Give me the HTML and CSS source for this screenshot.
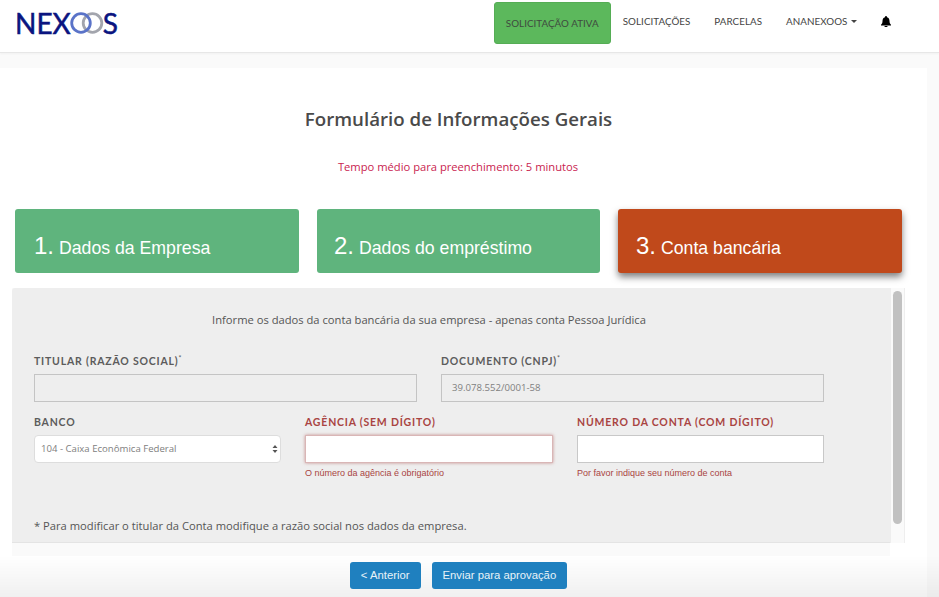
FILE: index.html
```html
<!DOCTYPE html>
<html lang="pt-BR">
<head>
<meta charset="utf-8">
<title>Nexoos</title>
<link rel="stylesheet" href="styles.css">
</head>
<body>
<header class="navbar">
  <a class="logo"><span>NEX</span><svg class="rings" width="38" height="24" viewBox="0 0 38 24"><circle cx="22.5" cy="12" r="9.3" fill="none" stroke="#a3a5ad" stroke-width="2.8"/><circle cx="11" cy="12" r="9.3" fill="none" stroke="#5a73c8" stroke-width="2.8"/></svg><span class="logo-s">S</span></a>
  <nav class="menu">
    <a class="menu-item active">SOLICITAÇÃO ATIVA</a>
    <a class="menu-item">SOLICITAÇÕES</a>
    <a class="menu-item">PARCELAS</a>
    <a class="menu-item">ANANEXOOS <i class="caret"></i></a>
    <a class="menu-item bell"><svg width="10" height="11" viewBox="0 0 20 22"><path d="M10 0a2 2 0 0 1 2 2v.6c3.4.9 5 3.600 5 7.400 0 4 1 5.500 3 7.500v1.500H0v-1.500c2-2 3-3.500 3-7.500 0-3.800 1.600-6.500 5-7.400V2a2 2 0 0 1 2-2zM7 20h6a3 3 0 0 1-6 0z" fill="#000"/></svg></a>
  </nav>
</header>
<main class="page">
  <h1 class="title">Formulário de Informações Gerais</h1>
  <p class="subtitle">Tempo médio para preenchimento: 5 minutos</p>
  <div class="steps">
    <div class="step"><b>1.</b> Dados da Empresa</div>
    <div class="step"><b>2.</b> Dados do empréstimo</div>
    <div class="step current"><b>3.</b> Conta bancária</div>
  </div>
  <section class="scroller">
    <div class="panel">
      <p class="intro">Informe os dados da conta bancária da sua empresa - apenas conta Pessoa Jurídica</p>
      <div class="row two">
        <div class="field">
          <label>TITULAR (RAZÃO SOCIAL)<sup>*</sup></label>
          <div class="input disabled"></div>
        </div>
        <div class="field">
          <label>DOCUMENTO (CNPJ)<sup>*</sup></label>
          <div class="input disabled">39.078.552/0001-58</div>
        </div>
      </div>
      <div class="row three">
        <div class="field">
          <label>BANCO</label>
          <div class="select">104 - Caixa Econômica Federal
            <svg class="updown" width="6" height="10" viewBox="0 0 6 10"><path d="M3 1l2.500 3H.5zM3 9L.5 6h5z" fill="#555"/></svg>
          </div>
        </div>
        <div class="field error">
          <label>AGÊNCIA (SEM DÍGITO)</label>
          <div class="input glow"></div>
          <small>O número da agência é obrigatório</small>
        </div>
        <div class="field error">
          <label>NÚMERO DA CONTA (COM DÍGITO)</label>
          <div class="input plain"></div>
          <small>Por favor indique seu número de conta</small>
        </div>
      </div>
      <p class="note">* Para modificar o titular da Conta modifique a razão social nos dados da empresa.</p>
    </div>
    <div class="track"><div class="thumb"></div></div>
  </section>
</main>
<footer class="actions">
  <a class="btn">&lt; Anterior</a>
  <a class="btn">Enviar para aprovação</a>
</footer>
</body>
</html>
```
FILE: styles.css
```css
* { box-sizing: border-box; }
html, body { height: 100%; }
body {
  margin: 0;
  height: 597px;
  overflow: hidden;
  background: #fafafa;
  font-family: "Open Sans", sans-serif;
  color: #555;
}
.navbar {
  height: 53px;
  background: #fff;
  border-bottom: 1px solid #e7e7e7;
  box-shadow: 0 1px 2px rgba(0,0,0,.04);
  display: flex;
  justify-content: space-between;
  padding-left: 15px;
}
.logo {
  display: flex;
  align-items: center;
  height: 24px;
  margin-top: 11px;
  font-family: Lato, sans-serif;
  font-size: 28px;
  line-height: 24px;
  color: #0a1480;
  -webkit-text-stroke: .5px #0a1480;
}
.rings { margin-left: -1px; flex: none; }
.logo-s { margin-left: -5px; font-size: 28px; }
.menu { display: flex; align-items: flex-start; padding-top: 2px; padding-right: 48px; }
.menu-item {
  font-family: Lato, sans-serif;
  font-size: 9.8px;
  color: #444;
  line-height: 14px;
  padding: 12px 12px 0;
  white-space: nowrap;
  letter-spacing: .05px;
}
.menu-item.active {
  width: 117px;
  height: 42px;
  padding: 13px 0 0;
  text-align: center;
  background: #5cb85c;
  border: 1px solid #55ad55;
  border-radius: 3px;
  color: #3f4a3f;
}
.caret {
  display: inline-block;
  border-top: 3.500px solid #444;
  border-left: 3.500px solid transparent;
  border-right: 3.500px solid transparent;
  vertical-align: 2px;
  margin-left: 1px;
}
.bell { padding-left: 12px; padding-right: 0; }
.bell svg { display: block; margin-top: 2px; }
.page {
  width: 927px;
  height: 529px;
  margin-top: 15px;
  background: #fff;
  padding-top: 39px;
}
.title {
  margin: 0;
  font-family: "Open Sans", sans-serif;
  font-weight: 600;
  font-size: 18.7px;
  line-height: 24px;
  color: #4a4a4a;
  text-align: center;
  padding-right: 10px;
}
.subtitle {
  margin: 28px 0 0;
  font-size: 11.2px;
  line-height: 16px;
  color: #c9234f;
  text-align: center;
  padding-right: 11px;
}
.steps {
  display: flex;
  gap: 18px;
  margin: 34px 25px 0 15px;
}
.step {
  width: 284px;
  height: 64px;
  border-radius: 3px;
  background: #5fb47d;
  color: #fff;
  font-family: "Liberation Sans", sans-serif;
  font-size: 17.700px;
  line-height: 20px;
  padding: 27px 0 0 19px;
}
.step:nth-child(2) { width: 283px; padding-left: 17px; }
.step b { font-weight: 400; font-size: 24px; }
.current {
  flex: none;
  padding-left: 18px;
  background: #c0491b;
  box-shadow: 0 4px 7px rgba(0,0,0,.5);
}
.scroller {
  display: flex;
  margin: 15px 0 0 12px;
  width: 893px;
  height: 268px;
  position: relative;
  background: linear-gradient(to right, #fafafa 878px, #fff 878px);
}
.panel {
  width: 878px;
  height: 255px;
  background: #eee;
  border-bottom: 1px solid #e4e4e4;
  border-radius: 3px 0 0 0;
  padding: 24px 22px 0;
}
.intro {
  margin: 0 0 26px;
  font-size: 11.2px;
  line-height: 16px;
  text-align: center;
  color: #555;
  padding-right: 44px;
}
.row { display: flex; }
.two { gap: 24px; margin-bottom: 13px; }
.two .field { width: 383px; }
.three { gap: 24px; height: 66px; }
.three .field { width: 247px; }
.three .field:nth-child(2) { width: 248px; }
label {
  display: block;
  font-family: Lato, sans-serif;
  font-weight: 700;
  font-size: 10.5px;
  line-height: 14px;
  letter-spacing: .8px;
  color: #5c5c5c;
  margin-bottom: 6px;
  white-space: nowrap;
}
sup { font-size: 7px; line-height: 0; font-weight: 400; letter-spacing: 0; }
.input {
  height: 28px;
  border: 1px solid #ccc;
  background: #fff;
  font-size: 9.6px;
  line-height: 26px;
  padding-left: 10px;
  color: #808080;
}
.input.disabled { background: #eee; border-color: #c4c4c4; }
.input.glow {
  border-color: #d9b6b6;
  box-shadow: 0 0 3px rgba(169,68,66,.55);
}
.input.plain { border-color: #c8c8c8; }
.select {
  position: relative;
  height: 28px;
  border: 1px solid #ddd;
  border-radius: 4px;
  background: #fff;
  font-size: 9.6px;
  line-height: 26px;
  padding-left: 6px;
  color: #808080;
}
.updown { position: absolute; right: 2px; top: 8px; }
.error label { color: #a94442; }
small {
  display: block;
  margin-top: 5px;
  font-family: "Liberation Sans", sans-serif;
  font-size: 9px;
  line-height: 11px;
  color: #a94442;
}
.note {
  margin: 37px 0 0;
  font-size: 11.2px;
  line-height: 16px;
  color: #555;
}
.track {
  position: absolute;
  left: 878px;
  top: 0;
  width: 15px;
  height: 255px;
  background: #fafafa;
  border-left: 1px solid #eee;
  border-right: 1px solid #eee;
}
.thumb {
  width: 9px;
  height: 233px;
  margin: 3px 0 0 2px;
  background: #c1c1c1;
  border-radius: 4.500px;
}
.actions {
  position: fixed;
  left: 0;
  right: 0;
  bottom: 0;
  height: 41px;
  display: flex;
  justify-content: center;
  gap: 11px;
  padding: 6px 22px 0 0;
  background: linear-gradient(rgba(0,0,0,0), rgba(0,0,0,.06));
}
.btn {
  height: 27px;
  padding: 0 11px;
  background: #1f80bf;
  border-radius: 3px;
  color: #e8f2f8;
  font-family: "Liberation Sans", sans-serif;
  font-size: 11.300px;
  line-height: 27px;
  white-space: nowrap;
}
```
